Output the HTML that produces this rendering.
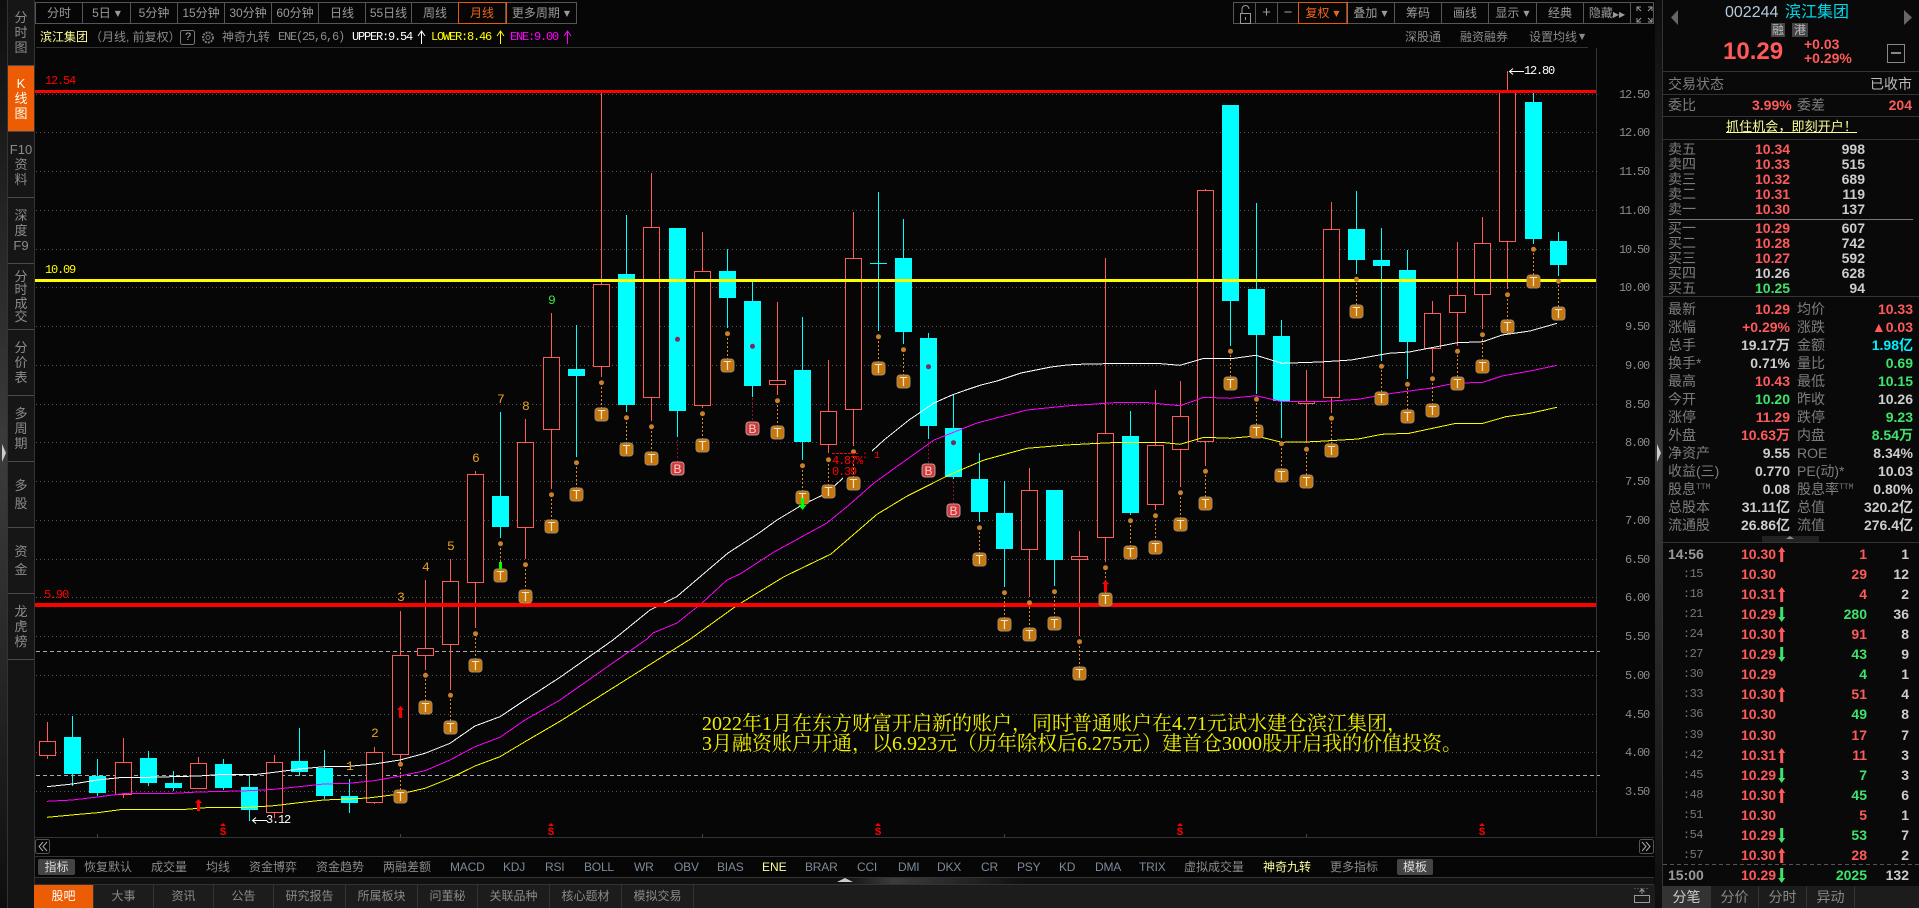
<!DOCTYPE html>
<html lang="zh"><head><meta charset="utf-8"><title>滨江集团</title>
<style>
*{box-sizing:border-box}
html,body{margin:0;padding:0;width:1919px;height:908px;overflow:hidden;background:#060606}
body{position:relative;font-family:"Liberation Sans","WenQuanYi Zen Hei","Noto Sans CJK SC",sans-serif;font-size:12px;color:#8a8a8a}
.t{position:absolute;white-space:nowrap;line-height:14px}
.m{font-family:"Liberation Mono","WenQuanYi Zen Hei",monospace;letter-spacing:-1.2px;font-size:12px}
svg{position:absolute;left:0;top:0}
.side{position:absolute;left:8px;width:26px;height:66px;background:#161616;border-bottom:1px solid #4a4a4a;display:flex;align-items:center;justify-content:center;text-align:center;color:#8c8c8c;font-size:13px}
.tb{position:absolute;top:2px;height:22px;border:1px solid #555;display:flex}
.tb div{border-right:1px solid #555;color:#9a9a9a;line-height:20px;text-align:center;white-space:nowrap;font-size:12px;flex:none}
.tb div:last-child{border-right:0}
.tb .on{outline:1px solid #e8590c;color:#f0641a;position:relative}
.car{font-size:8px;font-family:"DejaVu Sans",sans-serif;margin-left:4px;vertical-align:1px}
.ax{position:absolute;left:1619px;color:#8a8a8a;line-height:12px;white-space:nowrap}
.R{color:#ff5a5a}.G{color:#3fe36b}.W{color:#cdcdcd}.C{color:#00f0ff}
.q,.r{position:absolute;left:1663px;width:256px;height:18px;line-height:18px;font-size:14px}
.q i,.q em,.r i{font-style:normal;position:absolute;color:#7d7d7d;white-space:nowrap}
.q i{left:5px}.q em{left:134px}
.q b,.q u,.r b,.r u,.r s{position:absolute;text-decoration:none;font-weight:700;white-space:nowrap}
.q b{right:129px}.q u{right:6px}
.r i{right:216px;font-family:"Liberation Mono",monospace;font-size:12px;letter-spacing:-.5px;color:#777}
.r i.f{right:auto;left:5px;font-family:"Liberation Sans";font-size:14px;font-weight:700;color:#999;letter-spacing:0}
.r b{left:78px}.r u{right:52px}.r s{right:10px;color:#cdcdcd}
sup{font-size:8px;font-family:"Liberation Mono",monospace;color:#777;vertical-align:5px;line-height:0}
.bk{position:absolute;left:1668px;font-size:14px;color:#7d7d7d;line-height:15px;white-space:nowrap}
.bp{position:absolute;left:1755px;font-size:14px;font-weight:700;line-height:15px}
.bq{position:absolute;right:54px;font-size:14px;font-weight:700;line-height:15px;color:#cdcdcd}
.ix{position:absolute;top:859px;line-height:16px;height:16px;white-space:nowrap;color:#8a8a8a;text-align:center}
.en{color:#7c8a9a;letter-spacing:-.2px}
.tab{position:absolute;top:885px;height:23px;line-height:23px;text-align:center;color:#8a8a8a;background:#1c1c1c;border-right:1px solid #333}
.st{position:absolute;top:886px;height:22px;line-height:22px;text-align:center;background:#1c1c1c;border-right:1px solid #333;color:#888;font-size:14px}
.n{position:absolute;font-family:"Liberation Mono",monospace;font-size:13px;color:#e8a020;line-height:14px}
</style></head><body>

<!-- far left strip -->
<div style="position:absolute;left:0;top:0;width:7px;height:908px;background:linear-gradient(#0e0e0e,#3c3c3c 50%,#0e0e0e)"></div>
<div style="position:absolute;left:7px;top:0;width:1px;height:908px;background:#333"></div>
<div style="position:absolute;left:8px;top:659px;width:26px;height:249px;background:#141414"></div>
<div style="position:absolute;left:34px;top:0;width:1px;height:908px;background:#333"></div>

<!-- left side buttons -->
<div class="side" style="top:0;height:66px;line-height:15px">分<br>时<br>图</div>
<div class="side" style="top:66px;background:#eb5c05;color:#ffe;line-height:15px">K<br>线<br>图</div>
<div class="side" style="top:132px;line-height:15px">F10<br>资<br>料</div>
<div class="side" style="top:198px;line-height:15px">深<br>度<br>F9</div>
<div class="side" style="top:264px;line-height:13.4px">分<br>时<br>成<br>交</div>
<div class="side" style="top:330px;line-height:15px">分<br>价<br>表</div>
<div class="side" style="top:396px;line-height:15px">多<br>周<br>期</div>
<div class="side" style="top:462px;line-height:18px">多<br>股</div>
<div class="side" style="top:528px;line-height:18px">资<br>金</div>
<div class="side" style="top:594px;line-height:15px">龙<br>虎<br>榜</div>

<!-- top toolbar left -->
<div class="tb" style="left:35px;width:542px">
<div style="width:47px">分时</div><div style="width:48px">5日<span class="car">▼</span></div><div style="width:47px">5分钟</div><div style="width:47px">15分钟</div><div style="width:47px">30分钟</div><div style="width:47px">60分钟</div><div style="width:47px">日线</div><div style="width:46px">55日线</div><div style="width:47px">周线</div><div class="on" style="width:47px">月线</div><div style="width:70px">更多周期<span class="car">▼</span></div>
</div>
<!-- top toolbar right -->
<div class="tb" style="left:1233px;width:421px">
<div style="width:22px"></div><div style="width:22px;font-size:15px">+</div><div style="width:21px;font-size:15px">−</div><div class="on" style="width:48px">复权<span class="car">▼</span></div><div style="width:48px">叠加<span class="car">▼</span></div><div style="width:47px">筹码</div><div style="width:47px">画线</div><div style="width:48px">显示<span class="car">▼</span></div><div style="width:47px">经典</div><div style="width:47px">隐藏<span style="font-size:8px;font-family:'DejaVu Sans'">▶▶</span></div><div style="width:22px"></div>
</div>

<!-- info row -->
<span class="t" style="left:40px;top:30px;color:#ffff99">滨江集团</span>
<span class="t" style="left:90px;top:30px;color:#8a8a8a">（月线, 前复权）</span>
<span class="t" style="left:222px;top:30px;color:#8a8a8a">神奇九转</span>
<span class="t m" style="left:278px;top:30px;color:#8a8a8a">ENE(25,6,6)</span>
<span class="t m" style="left:352px;top:30px;color:#fff">UPPER:9.54</span>
<span class="t m" style="left:431px;top:30px;color:#ff0">LOWER:8.46</span>
<span class="t m" style="left:510px;top:30px;color:#f0f">ENE:9.00</span>
<span class="t" style="left:1405px;top:30px">深股通</span>
<span class="t" style="left:1460px;top:30px">融资融券</span>
<span class="t" style="left:1529px;top:30px">设置均线</span>
<span class="t" style="left:1579px;top:30px;font-size:8px;font-family:'DejaVu Sans'">▼</span>

<svg width="1919" height="908" viewBox="0 0 1919 908" fill="none">
<!-- grids -->
<g shape-rendering="crispEdges">
<path d="M36 47.5H1588" stroke="#333"/>
<path d="M1596.5 48V836M35 837.5H1654M35 856.5H1654M35 877.5H1654M35 884.5H1654" stroke="#333"/>
<path d="M36 94.5H1600M36 132.5H1600M36 171.5H1600M36 210.5H1600M36 249.5H1600M36 287.5H1600M36 326.5H1600M36 365.5H1600M36 404.5H1600M36 442.5H1600M36 481.5H1600M36 520.5H1600M36 559.5H1600M36 597.5H1600M36 636.5H1600M36 675.5H1600M36 714.5H1600M36 752.5H1600M36 791.5H1600" stroke="#555" stroke-dasharray="1 3"/>
<path d="M36 651.5H1600M36 775.5H1600" stroke="#aaa" stroke-dasharray="4 3"/>
<path d="M97.5 837v-3M400.5 837v-3M702.5 837v-3M1004.5 837v-3M1306.5 837v-3" stroke="#444"/>
<!-- wicks red -->
<path stroke="#ff5a5a" d="M47.5 722V759M123.5 738V798M198.5 757V788M274.5 755V818M374.5 747V804M400.5 611V764M425.5 580V670M450.5 559V690M475.5 471V628M525.5 419V559M551.5 313V489M601.5 93V377M651.5 173V421M702.5 232V408M777.5 302V395M828.5 360V453M853.5 212V446M1029.5 468V597M1079.5 531V636M1105.5 258V562M1155.5 390V510M1180.5 381V487M1205.5 189V466M1306.5 370V443M1331.5 202V413M1432.5 301V373M1457.5 242V346M1482.5 217V329M1507.5 71V289"/>
<!-- wicks cyan -->
<path stroke="#00ffff" d="M72.5 716V786M97.5 759V796M148.5 751V786M173.5 771V791M223.5 759V790M249.5 776V821M299.5 728V776M324.5 750V799M349.5 779V813M500.5 412V538M576.5 325V457M626.5 215V412M677.5 228V437M727.5 249V328M752.5 282V397M802.5 317V460M878.5 192V331M903.5 219V344M928.5 333V439M953.5 395V479M979.5 453V522M1004.5 481V587M1054.5 490V586M1130.5 411V515M1230.5 105V346M1256.5 203V394M1281.5 320V438M1356.5 191V274M1381.5 228V361M1407.5 250V379M1533.5 92V244M1558.5 232V276M870 263.5H887"/>
<!-- bodies red -->
<g fill="#060606" stroke="#ff5a5a">
<rect x="39.5" y="741.5" width="16" height="14"/><rect x="115.5" y="762.5" width="16" height="32"/><rect x="190.5" y="763.5" width="16" height="25"/><rect x="266.5" y="762.5" width="16" height="50"/><rect x="366.5" y="752.5" width="16" height="50"/><rect x="392.5" y="655.5" width="16" height="99"/><rect x="417.5" y="648.5" width="16" height="7"/><rect x="442.5" y="581.5" width="16" height="63"/><rect x="467.5" y="474.5" width="16" height="108"/><rect x="517.5" y="442.5" width="16" height="85"/><rect x="543.5" y="357.5" width="16" height="72"/><rect x="593.5" y="284.5" width="16" height="82"/><rect x="643.5" y="227.5" width="16" height="170"/><rect x="694.5" y="271.5" width="16" height="134"/><rect x="769.5" y="380.5" width="16" height="4"/><rect x="820.5" y="411.5" width="16" height="33"/><rect x="845.5" y="258.5" width="16" height="151"/><rect x="1021.5" y="490.5" width="16" height="59"/><rect x="1071.5" y="556.5" width="16" height="3"/><rect x="1097.5" y="433.5" width="16" height="104"/><rect x="1147.5" y="445.5" width="16" height="59"/><rect x="1172.5" y="416.5" width="16" height="33"/><rect x="1197.5" y="190.5" width="16" height="251"/><rect x="1298.5" y="401.5" width="16" height="2"/><rect x="1323.5" y="229.5" width="16" height="168"/><rect x="1424.5" y="313.5" width="16" height="35"/><rect x="1449.5" y="295.5" width="16" height="17"/><rect x="1474.5" y="243.5" width="16" height="51"/><rect x="1499.5" y="90.5" width="16" height="151"/>
</g>
<!-- bodies cyan -->
<path fill="#00ffff" d="M64 737h17v37h-17zM89 776h17v17h-17zM140 758h17v25h-17zM165 783h17v5h-17zM215 764h17v24h-17zM241 787h17v23h-17zM291 761h17v11h-17zM316 768h17v28h-17zM341 796h17v7h-17zM492 496h17v31h-17zM568 369h17v7h-17zM618 274h17v131h-17zM669 228h17v183h-17zM719 271h17v27h-17zM744 301h17v85h-17zM794 370h17v72h-17zM895 258h17v74h-17zM920 338h17v88h-17zM945 428h17v49h-17zM971 479h17v33h-17zM996 513h17v36h-17zM1046 490h17v70h-17zM1122 436h17v77h-17zM1222 105h17v196h-17zM1248 289h17v46h-17zM1273 336h17v65h-17zM1348 229h17v31h-17zM1373 260h17v6h-17zM1399 270h17v72h-17zM1525 102h17v137h-17zM1550 241h17v24h-17z"/>
</g>

<!-- ENE lines -->
<g stroke-width="1" shape-rendering="crispEdges">
<polyline stroke="#fff" points="47,786.7 72.5,784 97.5,780 123,777.3 148.6,777.3 198.6,776 223.6,774.3 257,774.3 274.3,772.3 299.3,769 324,766.7 349,766.3 374.3,764 400,760 425,753.3 450,743.3 475,726 500,716.7 525,700 560,677.3 613,640 650,610 676.7,596.7 728,553 759,533 777,520 802,505 827,493 843,478"/>
<polyline stroke="#fff" points="872,451 884,440 909,420 934,403 952,395 966,390 981,385 997,381 1021,373 1051,367 1067,365 1086,364 1120,363.5 1161,363.7 1180,365.3 1204,358.3 1234,358.3 1256,355.3 1282,363.3 1320,362 1351,360 1389,353.3 1409,352 1430,348 1457.5,342.7 1483,341.7 1502,335 1530,331 1557,323.3"/>
<polyline stroke="#f0f" points="47,801.3 72.5,800 97.5,797 123,793.7 173.6,793.3 198.6,792 249,790.7 274,789.3 299,786.7 324,784 349,783.3 374,780.7 400,776 425,770.7 450,760 475,746.7 500,737.3 525,720 560,700 647,639 653,633 677,623 702,603 727,580 740,574 774,552 827,523 849,505 874,483 899,465 934,440 977,423 1027,410 1066,406 1120,402.3 1144,402.3 1180,405.7 1204,397.3 1230,398.3 1256,395.7 1282,401.7 1320,401.7 1358,399.3 1392,393.3 1430,388.3 1454,383.3 1483,382.3 1502,376 1530,371 1557,365.3"/>
<polyline stroke="#ff0" points="47,817.3 79,814.3 97.5,812.7 123,809.3 186,809.3 211,807.3 249,807.3 274,805.7 299,802.7 324,800 368,798 400,794 425,788.3 450,778.3 475,766 500,756.7 525,741.7 560,721.3 690,639.3 733,608.3 741,603 784,576.7 831,554 877,514.3 906,496.7 949,475 984,460 1027,448.3 1066,445 1099,443.3 1120,442.3 1161,442.3 1180,444.3 1204,437.3 1230,438.3 1256,436 1282,442.3 1313,441.7 1358,439 1382,434.3 1409,433.3 1456,423.3 1483,423.3 1506,416.7 1530,413.3 1557,407.3"/>
</g>

<!-- horizontal lines -->
<rect x="35" y="90" width="1561" height="3" fill="#f00"/>
<rect x="35" y="279" width="1561" height="3" fill="#ff0"/>
<rect x="35" y="603" width="1561" height="4" fill="#f00"/>

<!-- connectors -->
<path stroke="#e08a1e" stroke-dasharray="2 2" d="M400.5 764V790M425.5 675V701M450.5 695V721M475.5 634V659M500.5 544V569M525.5 565V590M551.5 495V520M576.5 463V488M601.5 383V408M626.5 418V443M651.5 427V452M702.5 414V439M727.5 334V359M777.5 401V426M802.5 466V491M828.5 460V485M853.5 452V477M878.5 337V362M903.5 350V375M979.5 528V553M1004.5 593V618M1029.5 603V628M1054.5 592V617M1079.5 642V667M1105.5 568V593M1130.5 521V546M1155.5 516V541M1180.5 493V518M1205.5 471V497M1230.5 351V377M1256.5 399V425M1281.5 444V469M1306.5 449V475M1331.5 418V444M1356.5 279V305M1381.5 366V392M1407.5 384V410M1432.5 379V404M1457.5 351V377M1482.5 335V360M1507.5 295V320M1533.5 249V275M1558.5 281V307"/>
<path stroke="#8b1030" stroke-dasharray="2 2" d="M677.5 440V462M752.5 398V422M928.5 441V464M953.5 482V504"/>
<!-- dots -->
<path stroke="#c8802a" stroke-width="5" stroke-linecap="round" d="M400.5 764.3h0M425.5 675.3h0M450.5 695.3h0M475.5 633.7h0M500.5 543.7h0M525.5 564.7h0M551.5 494.7h0M576.5 462.7h0M601.5 382.7h0M626.5 417.7h0M651.5 426.7h0M702.5 413.7h0M727.5 333.7h0M777.5 400.7h0M802.5 465.7h0M828.5 459.7h0M853.5 451.7h0M878.5 336.7h0M903.5 349.7h0M979.5 527.7h0M1004.5 592.7h0M1029.5 602.7h0M1054.5 591.7h0M1079.5 641.7h0M1105.5 567.7h0M1130.5 520.7h0M1155.5 515.7h0M1180.5 492.7h0M1205.5 471.3h0M1230.5 351.3h0M1256.5 399.3h0M1281.5 443.7h0M1306.5 449.3h0M1331.5 418.3h0M1356.5 279.3h0M1381.5 366.3h0M1407.5 384.3h0M1432.5 378.7h0M1457.5 351.3h0M1482.5 334.7h0M1507.5 294.7h0M1533.5 249.3h0M1558.5 281.3h0"/>
<path stroke="#7a2a60" stroke-width="5" stroke-linecap="round" d="M677.5 339.3h0M752.5 346.3h0M928.5 366.7h0M953.5 442.7h0"/>

<!-- T markers -->
<g fill="#c87808" stroke="#a58a6c" stroke-width="1">
<rect x="394" y="790" width="13" height="13" rx="3"/><rect x="419" y="701" width="13" height="13" rx="3"/><rect x="444" y="721" width="13" height="13" rx="3"/><rect x="469" y="659" width="13" height="13" rx="3"/><rect x="494" y="569" width="13" height="13" rx="3"/><rect x="519" y="590" width="13" height="13" rx="3"/><rect x="545" y="520" width="13" height="13" rx="3"/><rect x="570" y="488" width="13" height="13" rx="3"/><rect x="595" y="408" width="13" height="13" rx="3"/><rect x="620" y="443" width="13" height="13" rx="3"/><rect x="645" y="452" width="13" height="13" rx="3"/><rect x="696" y="439" width="13" height="13" rx="3"/><rect x="721" y="359" width="13" height="13" rx="3"/><rect x="771" y="426" width="13" height="13" rx="3"/><rect x="796" y="491" width="13" height="13" rx="3"/><rect x="822" y="485" width="13" height="13" rx="3"/><rect x="847" y="477" width="13" height="13" rx="3"/><rect x="872" y="362" width="13" height="13" rx="3"/><rect x="897" y="375" width="13" height="13" rx="3"/><rect x="973" y="553" width="13" height="13" rx="3"/><rect x="998" y="618" width="13" height="13" rx="3"/><rect x="1023" y="628" width="13" height="13" rx="3"/><rect x="1048" y="617" width="13" height="13" rx="3"/><rect x="1073" y="667" width="13" height="13" rx="3"/><rect x="1099" y="593" width="13" height="13" rx="3"/><rect x="1124" y="546" width="13" height="13" rx="3"/><rect x="1149" y="541" width="13" height="13" rx="3"/><rect x="1174" y="518" width="13" height="13" rx="3"/><rect x="1199" y="497" width="13" height="13" rx="3"/><rect x="1224" y="377" width="13" height="13" rx="3"/><rect x="1250" y="425" width="13" height="13" rx="3"/><rect x="1275" y="469" width="13" height="13" rx="3"/><rect x="1300" y="475" width="13" height="13" rx="3"/><rect x="1325" y="444" width="13" height="13" rx="3"/><rect x="1350" y="305" width="13" height="13" rx="3"/><rect x="1375" y="392" width="13" height="13" rx="3"/><rect x="1401" y="410" width="13" height="13" rx="3"/><rect x="1426" y="404" width="13" height="13" rx="3"/><rect x="1451" y="377" width="13" height="13" rx="3"/><rect x="1476" y="360" width="13" height="13" rx="3"/><rect x="1501" y="320" width="13" height="13" rx="3"/><rect x="1527" y="275" width="13" height="13" rx="3"/><rect x="1552" y="307" width="13" height="13" rx="3"/>
</g>
<g fill="#efe4d4" font-family="Liberation Sans" font-size="13" text-anchor="middle">
<text x="400.5" y="801">T</text><text x="425.5" y="712">T</text><text x="450.5" y="732">T</text><text x="475.5" y="670">T</text><text x="500.5" y="580">T</text><text x="525.5" y="601">T</text><text x="551.5" y="531">T</text><text x="576.5" y="499">T</text><text x="601.5" y="419">T</text><text x="626.5" y="454">T</text><text x="651.5" y="463">T</text><text x="702.5" y="450">T</text><text x="727.5" y="370">T</text><text x="777.5" y="437">T</text><text x="802.5" y="502">T</text><text x="828.5" y="496">T</text><text x="853.5" y="488">T</text><text x="878.5" y="373">T</text><text x="903.5" y="386">T</text><text x="979.5" y="564">T</text><text x="1004.5" y="629">T</text><text x="1029.5" y="639">T</text><text x="1054.5" y="628">T</text><text x="1079.5" y="678">T</text><text x="1105.5" y="604">T</text><text x="1130.5" y="557">T</text><text x="1155.5" y="552">T</text><text x="1180.5" y="529">T</text><text x="1205.5" y="508">T</text><text x="1230.5" y="388">T</text><text x="1256.5" y="436">T</text><text x="1281.5" y="480">T</text><text x="1306.5" y="486">T</text><text x="1331.5" y="455">T</text><text x="1356.5" y="316">T</text><text x="1381.5" y="403">T</text><text x="1407.5" y="421">T</text><text x="1432.5" y="415">T</text><text x="1457.5" y="388">T</text><text x="1482.5" y="371">T</text><text x="1507.5" y="331">T</text><text x="1533.5" y="286">T</text><text x="1558.5" y="318">T</text>
</g>
<!-- B markers -->
<g fill="#d23a3a" stroke="#c99" stroke-width="1">
<rect x="671" y="462" width="13" height="13" rx="3"/><rect x="746" y="422" width="13" height="13" rx="3"/><rect x="922" y="464" width="13" height="13" rx="3"/><rect x="947" y="504" width="13" height="13" rx="3"/>
</g>
<g fill="#f3d0d0" font-family="Liberation Sans" font-size="12" text-anchor="middle">
<text x="677.5" y="473">B</text><text x="752.5" y="433">B</text><text x="928.5" y="475">B</text><text x="953.5" y="515">B</text>
</g>

<!-- arrows in chart -->
<path fill="#f00" d="M198.5 799l3.5 4h-2v8h-3v-8h-2zM400.5 706l3.5 4h-2v8h-3v-8h-2zM1105.5 580l3.5 4h-2v8h-3v-8h-2z"/>
<path fill="#0f0" d="M499 562h3v7h-3zM801 498h3v7h2.500l-4 5-4-5h2.500z"/>
<path stroke="#f00" stroke-dasharray="3 1" d="M832 453.500h26"/>
<path stroke="#fff" d="M267 820.500H253M256 817.500l-3.500 3 3.500 3M1524 71.500H1510M1513 68.500l-3.500 3 3.500 3"/>
<!-- S marks -->
<path fill="#f00" d="M223 823l3 3h-6zM551 823l3 3h-6zM878 823l3 3h-6zM1180 823l3 3h-6zM1482 823l3 3h-6z"/>
<g fill="#f00" font-family="Liberation Mono" font-size="11" font-weight="700" text-anchor="middle"><text x="223" y="835">S</text><text x="551" y="835">S</text><text x="878" y="835">S</text><text x="1180" y="835">S</text><text x="1482" y="835">S</text></g>

<!-- info arrows -->
<path stroke="#fff" d="M421.500 44V31M418 36l3.500-5 3.500 5"/>
<path stroke="#ff0" d="M500.500 44V31M497 36l3.500-5 3.500 5"/>
<path stroke="#f0f" d="M567.500 44V31M564 36l3.500-5 3.500 5"/>
<!-- help and gear -->
<rect x="180.500" y="30.500" width="14" height="14" rx="2" stroke="#777"/>
<circle cx="208" cy="37.500" r="5" stroke="#777" stroke-width="2" stroke-dasharray="2 1"/><circle cx="208" cy="37.500" r="2" stroke="#777"/>
<!-- lock & fullscreen -->
<path stroke="#999" d="M1240.500 13.500h10v10h-10zM1242 13v-4a3.500 3.500 0 0 1 7 0M1245.500 17v3"/>
<path stroke="#999" d="M1637 11V7h4M1648 7h4v4M1652 18v4h-4M1641 22h-4v-4M1637 7l4 4M1652 7l-4 4M1652 22l-4-4M1637 22l4-4"/>
<!-- collapse triangles -->
<path fill="#ccc" d="M2 444l4 9-4 9z"/>
<!-- scroll buttons -->
<rect x="35.500" y="839.500" width="14" height="14" rx="2" stroke="#555"/><path stroke="#aaa" d="M43 842l-4 4.500 4 4.500M47 842l-4 4.500 4 4.500"/>
<rect x="1639.500" y="839.500" width="14" height="14" rx="2" stroke="#555"/><path stroke="#aaa" d="M1642 842l4 4.500-4 4.500M1646 842l4 4.500-4 4.500"/>
</svg>

<span class="t" style="left:185px;top:30px;font-size:11px;color:#aaa">?</span>

<!-- chart labels -->
<span class="t m" style="left:45px;top:74px;color:#f00">12.54</span>
<span class="t m" style="left:45px;top:263px;color:#ff0">10.09</span>
<span class="t m" style="left:44px;top:588px;color:#f00">5.90</span>
<span class="t m" style="left:1524px;top:64px;color:#fff">12.80</span>
<span class="t m" style="left:266px;top:813px;color:#fff">3.12</span>
<span class="n" style="left:346px;top:760px">1</span>
<span class="n" style="left:371px;top:727px">2</span>
<span class="n" style="left:397px;top:591px">3</span>
<span class="n" style="left:422px;top:561px">4</span>
<span class="n" style="left:447px;top:540px">5</span>
<span class="n" style="left:472px;top:452px">6</span>
<span class="n" style="left:497px;top:393px">7</span>
<span class="n" style="left:522px;top:400px">8</span>
<span class="n" style="left:548px;top:294px;color:#3fe03f">9</span>
<span class="t m" style="left:832px;top:454px;color:#f00">4.87%</span>
<span class="t m" style="left:832px;top:465px;color:#f00">0.39</span>
<span class="t m" style="left:862px;top:450px;color:#f00;letter-spacing:0;font-size:10px">: 1</span>

<!-- axis -->
<span class="ax m" style="top:89px">12.50</span><span class="ax m" style="top:127px">12.00</span><span class="ax m" style="top:166px">11.50</span><span class="ax m" style="top:205px">11.00</span><span class="ax m" style="top:244px">10.50</span><span class="ax m" style="top:282px">10.00</span>
<span class="ax m" style="top:321px;left:1625px">9.50</span><span class="ax m" style="top:360px;left:1625px">9.00</span><span class="ax m" style="top:399px;left:1625px">8.50</span><span class="ax m" style="top:437px;left:1625px">8.00</span><span class="ax m" style="top:476px;left:1625px">7.50</span><span class="ax m" style="top:515px;left:1625px">7.00</span><span class="ax m" style="top:554px;left:1625px">6.50</span><span class="ax m" style="top:592px;left:1625px">6.00</span><span class="ax m" style="top:631px;left:1625px">5.50</span><span class="ax m" style="top:670px;left:1625px">5.00</span><span class="ax m" style="top:709px;left:1625px">4.50</span><span class="ax m" style="top:747px;left:1625px">4.00</span><span class="ax m" style="top:786px;left:1625px">3.50</span>

<!-- annotation -->
<div style="position:absolute;left:702px;top:714px;font-family:'Liberation Serif','Noto Serif CJK SC',serif;font-size:20px;line-height:20px;color:#f0f000;white-space:nowrap">2022年1月在东方财富开启新的账户，同时普通账户在4.71元试水建仓滨江集团，<br>3月融资账户开通，以6.923元（历年除权后6.275元）建首仓3000股开启我的价值投资。</div>

<!-- index row -->
<div class="ix" style="left:38px;width:37px;background:#444;color:#ddd;border-radius:2px">指标</div>
<span class="ix" style="left:84px">恢复默认</span><span class="ix" style="left:151px">成交量</span><span class="ix" style="left:206px">均线</span><span class="ix" style="left:249px">资金博弈</span><span class="ix" style="left:316px">资金趋势</span><span class="ix" style="left:383px">两融差额</span>
<span class="ix en" style="left:450px">MACD</span><span class="ix en" style="left:503px">KDJ</span><span class="ix en" style="left:545px">RSI</span><span class="ix en" style="left:584px">BOLL</span><span class="ix en" style="left:634px">WR</span><span class="ix en" style="left:674px">OBV</span><span class="ix en" style="left:717px">BIAS</span><span class="ix" style="left:762px;color:#ffff99">ENE</span><span class="ix en" style="left:805px">BRAR</span><span class="ix en" style="left:857px">CCI</span><span class="ix en" style="left:898px">DMI</span><span class="ix en" style="left:937px">DKX</span><span class="ix en" style="left:981px">CR</span><span class="ix en" style="left:1017px">PSY</span><span class="ix en" style="left:1059px">KD</span><span class="ix en" style="left:1095px">DMA</span><span class="ix en" style="left:1139px">TRIX</span>
<span class="ix" style="left:1184px">虚拟成交量</span><span class="ix" style="left:1263px;color:#ffff99">神奇九转</span><span class="ix" style="left:1330px">更多指标</span>
<div class="ix" style="left:1397px;width:36px;background:#444;color:#ddd;border-radius:2px">模板</div>

<!-- strip -->
<div style="position:absolute;left:35px;top:878px;width:1619px;height:6px;background:linear-gradient(90deg,#111 50%,#3c3c3c 53%,#111 61%)"></div>
<svg width="1919" height="908" style="pointer-events:none"><path fill="#ccc" d="M845 878l8 4h-16z"/></svg>

<!-- bottom tabs -->
<div style="position:absolute;left:35px;top:885px;width:1620px;height:23px;background:#1c1c1c"></div>
<div class="tab" style="left:34px;width:60px;background:#eb5c05;color:#fff">股吧</div>
<div class="tab" style="left:94px;width:60px">大事</div><div class="tab" style="left:154px;width:60px">资讯</div><div class="tab" style="left:214px;width:60px">公告</div><div class="tab" style="left:274px;width:72px">研究报告</div><div class="tab" style="left:346px;width:72px">所属板块</div><div class="tab" style="left:418px;width:60px">问董秘</div><div class="tab" style="left:478px;width:72px">关联品种</div><div class="tab" style="left:550px;width:72px">核心题材</div><div class="tab" style="left:622px;width:72px">模拟交易</div>
<svg width="1919" height="908" fill="none"><path stroke="#999" d="M1634.500 895.500h15v7h-15zM1642 894v-5M1639.500 892l2.500-3 2.500 3"/><path stroke="#777" stroke-dasharray="1 2" d="M1634.500 888.500h15"/></svg>

<!-- right panel -->
<div style="position:absolute;left:1655px;top:0;width:7px;height:908px;background:linear-gradient(#0e0e0e,#3c3c3c 50%,#0e0e0e)"></div>
<div style="position:absolute;left:1662px;top:0;width:1px;height:908px;background:#333"></div>
<div style="position:absolute;left:1663px;top:0;width:256px;height:908px;background:#090909"></div>
<svg width="1919" height="908" fill="none">
<path fill="#ccc" d="M1657 444l4 9-4 9z"/>
<path fill="#666" d="M1678 10v15l-7-7.500zM1904 10v15l8-7.500z"/>
<rect x="1887.500" y="44.500" width="17" height="18" stroke="#888"/><rect x="1891" y="52" width="10" height="2" fill="#888"/>
<g shape-rendering="crispEdges" stroke="#333"><path d="M1663 71.500H1919M1663 94.500H1919M1663 116.500H1919M1663 139.500H1919M1663 296.500H1919M1663 542.500H1919"/><path stroke="#777" d="M1668 219.500H1913"/></g>
<path stroke="#555" stroke-dasharray="4 3" d="M1663 864.500H1919"/>
<rect x="1762" y="536" width="57" height="6" fill="#222"/><path fill="#888" d="M1790 536l4 3h-8z"/>
<g fill="#ff5a5a"><path d="M1781.700 547l3.500 5h-2v10h-3v-10h-2zM1781.700 587l3.500 5h-2v10h-3v-10h-2zM1781.700 627l3.500 5h-2v10h-3v-10h-2zM1781.700 687l3.500 5h-2v10h-3v-10h-2zM1781.700 748l3.500 5h-2v10h-3v-10h-2zM1781.700 788l3.500 5h-2v10h-3v-10h-2zM1781.700 848l3.500 5h-2v10h-3v-10h-2z"/></g>
<g fill="#3fe36b"><path d="M1781.700 622l3.500-5h-2v-10h-3v10h-2zM1781.700 662l3.500-5h-2v-10h-3v10h-2zM1781.700 783l3.500-5h-2v-10h-3v10h-2zM1781.700 843l3.500-5h-2v-10h-3v10h-2zM1781.700 883l3.500-5h-2v-10h-3v10h-2z"/></g>
</svg>
<span class="t" style="left:1725px;top:5px;font-size:16px;line-height:16px;color:#b4c8dc">002244</span>
<span class="t" style="left:1785px;top:5px;font-size:16px;line-height:16px;color:#00d8e8">滨江集团</span>
<span class="t" style="left:1771px;top:23px;width:14px;height:14px;background:#444;color:#bbb;text-align:center;font-size:12px">融</span>
<span class="t" style="left:1792px;top:23px;width:16px;height:14px;background:#444;color:#bbb;text-align:center;font-size:12px">港</span>
<span class="t" style="left:1723px;top:39px;font-size:24px;line-height:26px;font-weight:700;color:#ff5a5a;letter-spacing:0">10.29</span>
<span class="t" style="left:1804px;top:37px;font-size:14px;font-weight:700;color:#ff5a5a;line-height:14px">+0.03</span>
<span class="t" style="left:1804px;top:51px;font-size:14px;font-weight:700;color:#ff5a5a;line-height:14px">+0.29%</span>
<span class="t" style="left:1668px;top:77px;font-size:14px;color:#7d7d7d">交易状态</span>
<span class="t" style="right:7px;top:77px;font-size:14px;color:#bbb">已收市</span>
<span class="t" style="left:1668px;top:98px;font-size:14px;color:#7d7d7d">委比</span>
<span class="t R" style="left:1752px;top:98px;font-size:14px;font-weight:700">3.99%</span>
<span class="t" style="left:1797px;top:98px;font-size:14px;color:#7d7d7d">委差</span>
<span class="t R" style="right:7px;top:98px;font-size:14px;font-weight:700">204</span>
<span class="t" style="left:1726px;top:120px;font-size:13px;color:#ffff99;text-decoration:underline;letter-spacing:.1px">抓住机会，即刻开户！</span>

<!-- order book -->
<span class="bk" style="top:142px">卖五</span><span class="bp R" style="top:142px">10.34</span><span class="bq" style="top:142px">998</span>
<span class="bk" style="top:157px">卖四</span><span class="bp R" style="top:157px">10.33</span><span class="bq" style="top:157px">515</span>
<span class="bk" style="top:172px">卖三</span><span class="bp R" style="top:172px">10.32</span><span class="bq" style="top:172px">689</span>
<span class="bk" style="top:187px">卖二</span><span class="bp R" style="top:187px">10.31</span><span class="bq" style="top:187px">119</span>
<span class="bk" style="top:202px">卖一</span><span class="bp R" style="top:202px">10.30</span><span class="bq" style="top:202px">137</span>
<span class="bk" style="top:221px">买一</span><span class="bp R" style="top:221px">10.29</span><span class="bq" style="top:221px">607</span>
<span class="bk" style="top:236px">买二</span><span class="bp R" style="top:236px">10.28</span><span class="bq" style="top:236px">742</span>
<span class="bk" style="top:251px">买三</span><span class="bp R" style="top:251px">10.27</span><span class="bq" style="top:251px">592</span>
<span class="bk" style="top:266px">买四</span><span class="bp W" style="top:266px">10.26</span><span class="bq" style="top:266px">628</span>
<span class="bk" style="top:281px">买五</span><span class="bp G" style="top:281px">10.25</span><span class="bq" style="top:281px">94</span>

<!-- stats -->
<div class="q" style="top:300px"><i>最新</i><b class="R">10.29</b><em>均价</em><u class="R">10.33</u></div>
<div class="q" style="top:318px"><i>涨幅</i><b class="R">+0.29%</b><em>涨跌</em><u class="R">▲0.03</u></div>
<div class="q" style="top:336px"><i>总手</i><b class="W">19.17万</b><em>金额</em><u class="C">1.98亿</u></div>
<div class="q" style="top:354px"><i>换手*</i><b class="W">0.71%</b><em>量比</em><u class="G">0.69</u></div>
<div class="q" style="top:372px"><i>最高</i><b class="R">10.43</b><em>最低</em><u class="G">10.15</u></div>
<div class="q" style="top:390px"><i>今开</i><b class="G">10.20</b><em>昨收</em><u class="W">10.26</u></div>
<div class="q" style="top:408px"><i>涨停</i><b class="R">11.29</b><em>跌停</em><u class="G">9.23</u></div>
<div class="q" style="top:426px"><i>外盘</i><b class="R">10.63万</b><em>内盘</em><u class="G">8.54万</u></div>
<div class="q" style="top:444px"><i>净资产</i><b class="W">9.55</b><em>ROE</em><u class="W">8.34%</u></div>
<div class="q" style="top:462px"><i>收益(三)</i><b class="W">0.770</b><em>PE(动)*</em><u class="W">10.03</u></div>
<div class="q" style="top:480px"><i>股息<sup>TTM</sup></i><b class="W">0.08</b><em>股息率<sup>TTM</sup></em><u class="W">0.80%</u></div>
<div class="q" style="top:498px"><i>总股本</i><b class="W">31.11亿</b><em>总值</em><u class="W">320.2亿</u></div>
<div class="q" style="top:516px"><i>流通股</i><b class="W">26.86亿</b><em>流值</em><u class="W">276.4亿</u></div>

<!-- ticks -->
<div class="r" style="top:545px"><i class="f">14:56</i><b class="R">10.30</b><u class="R">1</u><s>1</s></div>
<div class="r" style="top:565px"><i>:15</i><b class="R">10.30</b><u class="R">29</u><s>12</s></div>
<div class="r" style="top:585px"><i>:18</i><b class="R">10.31</b><u class="R">4</u><s>2</s></div>
<div class="r" style="top:605px"><i>:21</i><b class="R">10.29</b><u class="G">280</u><s>36</s></div>
<div class="r" style="top:625px"><i>:24</i><b class="R">10.30</b><u class="R">91</u><s>8</s></div>
<div class="r" style="top:645px"><i>:27</i><b class="R">10.29</b><u class="G">43</u><s>9</s></div>
<div class="r" style="top:665px"><i>:30</i><b class="R">10.29</b><u class="G">4</u><s>1</s></div>
<div class="r" style="top:685px"><i>:33</i><b class="R">10.30</b><u class="R">51</u><s>4</s></div>
<div class="r" style="top:705px"><i>:36</i><b class="R">10.30</b><u class="G">49</u><s>8</s></div>
<div class="r" style="top:726px"><i>:39</i><b class="R">10.30</b><u class="R">17</u><s>7</s></div>
<div class="r" style="top:746px"><i>:42</i><b class="R">10.31</b><u class="R">11</u><s>3</s></div>
<div class="r" style="top:766px"><i>:45</i><b class="R">10.29</b><u class="G">7</u><s>3</s></div>
<div class="r" style="top:786px"><i>:48</i><b class="R">10.30</b><u class="G">45</u><s>6</s></div>
<div class="r" style="top:806px"><i>:51</i><b class="R">10.30</b><u class="R">5</u><s>1</s></div>
<div class="r" style="top:826px"><i>:54</i><b class="R">10.29</b><u class="G">53</u><s>7</s></div>
<div class="r" style="top:846px"><i>:57</i><b class="R">10.30</b><u class="R">28</u><s>2</s></div>
<div class="r" style="top:866px"><i class="f">15:00</i><b class="R">10.29</b><u class="G">2025</u><s>132</s></div>

<!-- status tabs -->
<div style="position:absolute;left:1663px;top:886px;width:256px;height:22px;background:#1c1c1c"></div>
<div class="st" style="left:1663px;width:48px;background:#333;color:#ccc">分笔</div>
<div class="st" style="left:1711px;width:48px">分价</div>
<div class="st" style="left:1759px;width:48px">分时</div>
<div class="st" style="left:1807px;width:48px">异动</div>
</body></html>
